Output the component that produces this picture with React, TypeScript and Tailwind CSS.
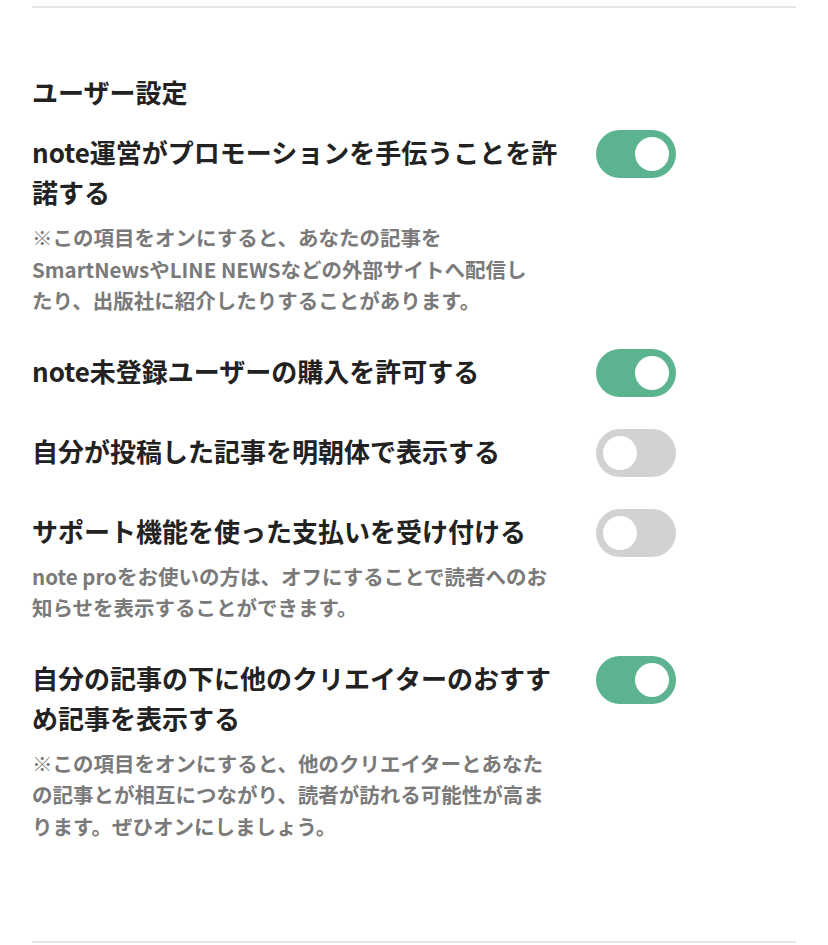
import * as React from 'react'

type Setting = {
  title: React.ReactNode
  note?: React.ReactNode
  on: boolean
}

const settings: Setting[] = [
  {
    title: (
      <>
        note運営がプロモーションを手伝うことを許
        <br />
        諾する
      </>
    ),
    note: (
      <>
        ※この項目をオンにすると、あなたの記事を
        <br />
        SmartNewsやLINE NEWSなどの外部サイトへ配信し
        <br />
        たり、出版社に紹介したりすることがあります。
      </>
    ),
    on: true,
  },
  { title: 'note未登録ユーザーの購入を許可する', on: true },
  { title: '自分が投稿した記事を明朝体で表示する', on: false },
  {
    title: 'サポート機能を使った支払いを受け付ける',
    note: (
      <>
        note proをお使いの方は、オフにすることで読者へのお
        <br />
        知らせを表示することができます。
      </>
    ),
    on: false,
  },
  {
    title: (
      <>
        自分の記事の下に他のクリエイターのおすす
        <br />
        め記事を表示する
      </>
    ),
    note: (
      <>
        ※この項目をオンにすると、他のクリエイターとあなた
        <br />
        の記事とが相互につながり、読者が訪れる可能性が高ま
        <br />
        ります。ぜひオンにしましょう。
      </>
    ),
    on: true,
  },
]

function Toggle({ defaultOn }: { defaultOn: boolean }) {
  const [on, setOn] = React.useState(defaultOn)
  return (
    <button
      type="button"
      onClick={() => setOn(!on)}
      className={`relative block shrink-0 w-[80px] h-[48px] rounded-full transition-colors ${
        on ? 'bg-[#5bb38f]' : 'bg-[#d2d2d2]'
      }`}
    >
      <span
        className={`absolute top-[7px] w-[34px] h-[34px] rounded-full bg-white transition-all ${
          on ? 'left-[39px]' : 'left-[7px]'
        }`}
      />
    </button>
  )
}

export default function App() {
  return (
    <div
      className="bg-white min-h-[945px] px-8 pt-[6px] text-[#222]"
      style={{ fontFamily: '"Noto Sans CJK JP", "Noto Sans", sans-serif' }}
    >
      <div className="border-t-2 border-[#e6e6e6]" />

      <h2 className="mt-[66px] text-[26px] leading-[36px] font-bold">ユーザー設定</h2>

      <div className="mt-[20px] flex flex-col gap-8">
        {settings.map((s, i) => (
          <div key={i} className="flex items-start">
            <div className="w-[532px]">
              <p className="mt-[2px] text-[26px] leading-[40px] font-bold whitespace-nowrap">{s.title}</p>
              {s.note && (
                <p className="mt-[10px] text-[20.5px] leading-[31.5px] font-bold text-[#7a7a7a] whitespace-nowrap">
                  {s.note}
                </p>
              )}
            </div>
            <div className="ml-[32px] flex">
              <Toggle defaultOn={s.on} />
            </div>
          </div>
        ))}
      </div>

      <div className="mt-[99px] border-t-2 border-[#e6e6e6]" />
    </div>
  )
}
